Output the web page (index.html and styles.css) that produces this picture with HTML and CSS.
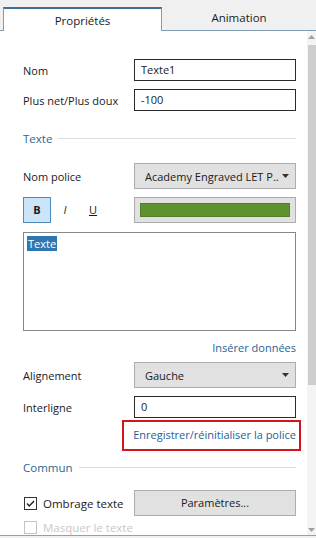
FILE: index.html
```html
<!DOCTYPE html>
<html lang="fr">

<head>
    <meta charset="UTF-8">
    <title>Propriétés</title>
    <link rel="stylesheet" href="styles.css">
</head>

<body>

    <!-- Tabs -->
    <div class="tabs">
        <div class="tab active">Propriétés</div>
        <div class="tab">Animation</div>
    </div>

    <div class="panel">
        <div class="content">

            <div class="row first">
                <span class="label">Nom</span>
                <div class="field">Texte1</div>
            </div>
            <div class="row">
                <span class="label">Plus net/Plus doux</span>
                <div class="field">-100</div>
            </div>

            <div class="section">
                <span>Texte</span>
                <div class="rule"></div>
            </div>

            <div class="row">
                <span class="label">Nom police</span>
                <div class="combo">
                    <span>Academy Engraved LET P..</span>
                    <svg class="arrow" width="7" height="4" viewBox="0 0 7 4"><path d="M0 0h7L3.5 4z" fill="#333"/></svg>
                </div>
            </div>

            <div class="row style-row">
                <div class="styles">
                    <span class="style-btn on bold">B</span>
                    <span class="style-btn italic">I</span>
                    <span class="style-btn under">U</span>
                </div>
                <div class="color-btn"><div class="swatch"></div></div>
            </div>

            <div class="text-box"><span class="selected">Texte</span></div>

            <div class="link-line insert"><a href="#">Insérer données</a></div>

            <div class="row after-link">
                <span class="label">Alignement</span>
                <div class="combo wide">
                    <span>Gauche</span>
                    <svg class="arrow" width="7" height="4" viewBox="0 0 7 4"><path d="M0 0h7L3.5 4z" fill="#333"/></svg>
                </div>
            </div>
            <div class="row">
                <span class="label">Interligne</span>
                <div class="field">0</div>
            </div>

            <div class="link-line reset">
                <a href="#" class="boxed">Enregistrer/réinitialiser la police</a>
            </div>

            <div class="section">
                <span>Commun</span>
                <div class="rule"></div>
            </div>

            <div class="row check-row">
                <label class="check">
                    <span class="box">
                        <svg width="11" height="11" viewBox="0 0 11 11"><path d="M2 5.5l2.3 2.4L9 3" fill="none" stroke="#222" stroke-width="1.4"/></svg>
                    </span>
                    Ombrage texte
                </label>
                <div class="button">Paramètres...</div>
            </div>
            <div class="row check-row disabled">
                <label class="check">
                    <span class="box"></span>
                    Masquer le texte
                </label>
            </div>

        </div>

        <!-- Scrollbar -->
        <div class="scrollbar">
            <svg width="7" height="4" viewBox="0 0 7 4" class="sb-up"><path d="M0 4h7L3.5 0z" fill="#a0a0a0"/></svg>
            <div class="thumb"></div>
            <div class="track"></div>
            <svg width="7" height="4" viewBox="0 0 7 4" class="sb-down"><path d="M0 0h7L3.5 4z" fill="#a0a0a0"/></svg>
        </div>
    </div>

</body>

</html>
```

FILE: styles.css
```css
body {
    font-family: "Open Sans", "Noto Sans", sans-serif;
    font-size: 11px;
    color: #1a1a1a;
    margin: 0;
    width: 316px;
    height: 538px;
    overflow: hidden;
    background-color: #f0f0f0;
}

/* Tabs */
.tabs {
    display: flex;
    height: 31px;
    padding: 7px 0 0 3px;
    box-sizing: border-box;
    border-bottom: 1px solid #7f9db5;
    font-size: 11.5px;
}

.tab {
    flex: 1;
    text-align: center;
    line-height: 22px;
}

.tab.active {
    flex: 0 0 159px;
    box-sizing: border-box;
    background-color: #fff;
    border: 1px solid #7f9db5;
    border-top: 2px solid #3e6f93;
    border-bottom: none;
    height: 24px;
    line-height: 23px;
}

/* Panel */
.panel {
    display: flex;
    height: 504px;
    background-color: #fff;
    border-bottom: 1px solid #8aa3b7;
}

.content {
    flex: 1;
    padding: 0 11px 0 23px;
    overflow: hidden;
}

.row {
    display: flex;
    align-items: center;
    margin-top: 8px;
}

.row.first {
    margin-top: 28px;
}

.label {
    width: 111px;
    flex-shrink: 0;
}

.field {
    flex: 1;
    height: 22px;
    box-sizing: border-box;
    border: 1px solid #2b2b2b;
    padding-left: 6px;
    line-height: 20px;
}

.combo {
    flex: 1;
    height: 26px;
    box-sizing: border-box;
    border: 1px solid #adadad;
    background-color: #e1e1e1;
    display: flex;
    align-items: center;
    padding: 0 6px 0 10px;
}

.combo span {
    flex: 1;
    white-space: nowrap;
    overflow: hidden;
}

.arrow {
    flex-shrink: 0;
}

/* Section headers */
.section {
    display: flex;
    align-items: center;
    margin-top: 20px;
    margin-bottom: 17px;
    color: #2f6690;
    font-size: 11.5px;
}

.section .rule {
    flex: 1;
    height: 1px;
    background-color: #d7dde3;
    margin-left: 6px;
}

/* Bold / italic / underline */
.style-row {
    margin-top: 8px;
}

.styles {
    width: 110px;
    display: flex;
    align-items: center;
}

.style-btn {
    width: 28px;
    height: 26px;
    box-sizing: border-box;
    text-align: center;
    line-height: 24px;
    border: 1px solid transparent;
}

.style-btn.on {
    background-color: #cce4f7;
    border-color: #4f8cbd;
}

.bold {
    font-weight: bold;
}

.italic {
    font-style: italic;
}

.under {
    text-decoration: underline;
}

.color-btn {
    flex: 1;
    height: 26px;
    box-sizing: border-box;
    border: 1px solid #adadad;
    background-color: #e1e1e1;
    padding: 5px;
    margin-left: 1px;
}

.swatch {
    height: 100%;
    background-color: #5e922f;
    border: 1px solid #4f7f26;
    box-sizing: border-box;
}

/* Text box */
.text-box {
    margin-top: 9px;
    height: 99px;
    box-sizing: border-box;
    border: 1px solid #828790;
    padding: 4px 3px;
    line-height: 14px;
}

.selected {
    background-color: #2f77b2;
    color: #fff;
    padding: 0 1px;
}

/* Links */
.link-line {
    text-align: right;
    line-height: 16px;
}

.link-line a {
    color: #1f5f96;
    text-decoration: none;
}

.link-line.insert {
    margin-top: 9px;
}

.row.after-link {
    margin-top: 6px;
}

.link-line.reset {
    margin-top: 2px;
    margin-right: -5px;
}

.boxed {
    display: inline-block;
    border: 2px solid #d4141c;
    padding: 5px 3px 6px 9px;
}

.link-line.reset + .section {
    margin-top: 9px;
    margin-bottom: 15px;
}

/* Checkbox rows */
.check-row {
    margin-top: 1px;
}

.check-row.disabled {
    margin-top: 4px;
    color: #c8c8c8;
}

.check {
    width: 111px;
    flex-shrink: 0;
    display: flex;
    align-items: center;
    white-space: nowrap;
    font-size: 11.5px;
}

.box {
    width: 13px;
    height: 13px;
    box-sizing: border-box;
    border: 1px solid #333;
    margin: 0 6px 0 1px;
    display: flex;
    align-items: center;
    justify-content: center;
}

.disabled .box {
    border-color: #c4c4c4;
}

.button {
    flex: 1;
    height: 26px;
    box-sizing: border-box;
    border: 1px solid #adadad;
    background-color: #e1e1e1;
    text-align: center;
    line-height: 24px;
}

/* Scrollbar */
.scrollbar {
    width: 9px;
    display: flex;
    flex-direction: column;
    align-items: center;
    background-color: #f4f4f4;
}

.sb-up {
    margin-top: 4px;
    margin-bottom: 6px;
}

.thumb {
    width: 8px;
    margin-left: 1px;
    height: 340px;
    background-color: #cdcdcd;
}

.track {
    flex: 1;
}

.sb-down {
    margin-bottom: 3px;
}
```
